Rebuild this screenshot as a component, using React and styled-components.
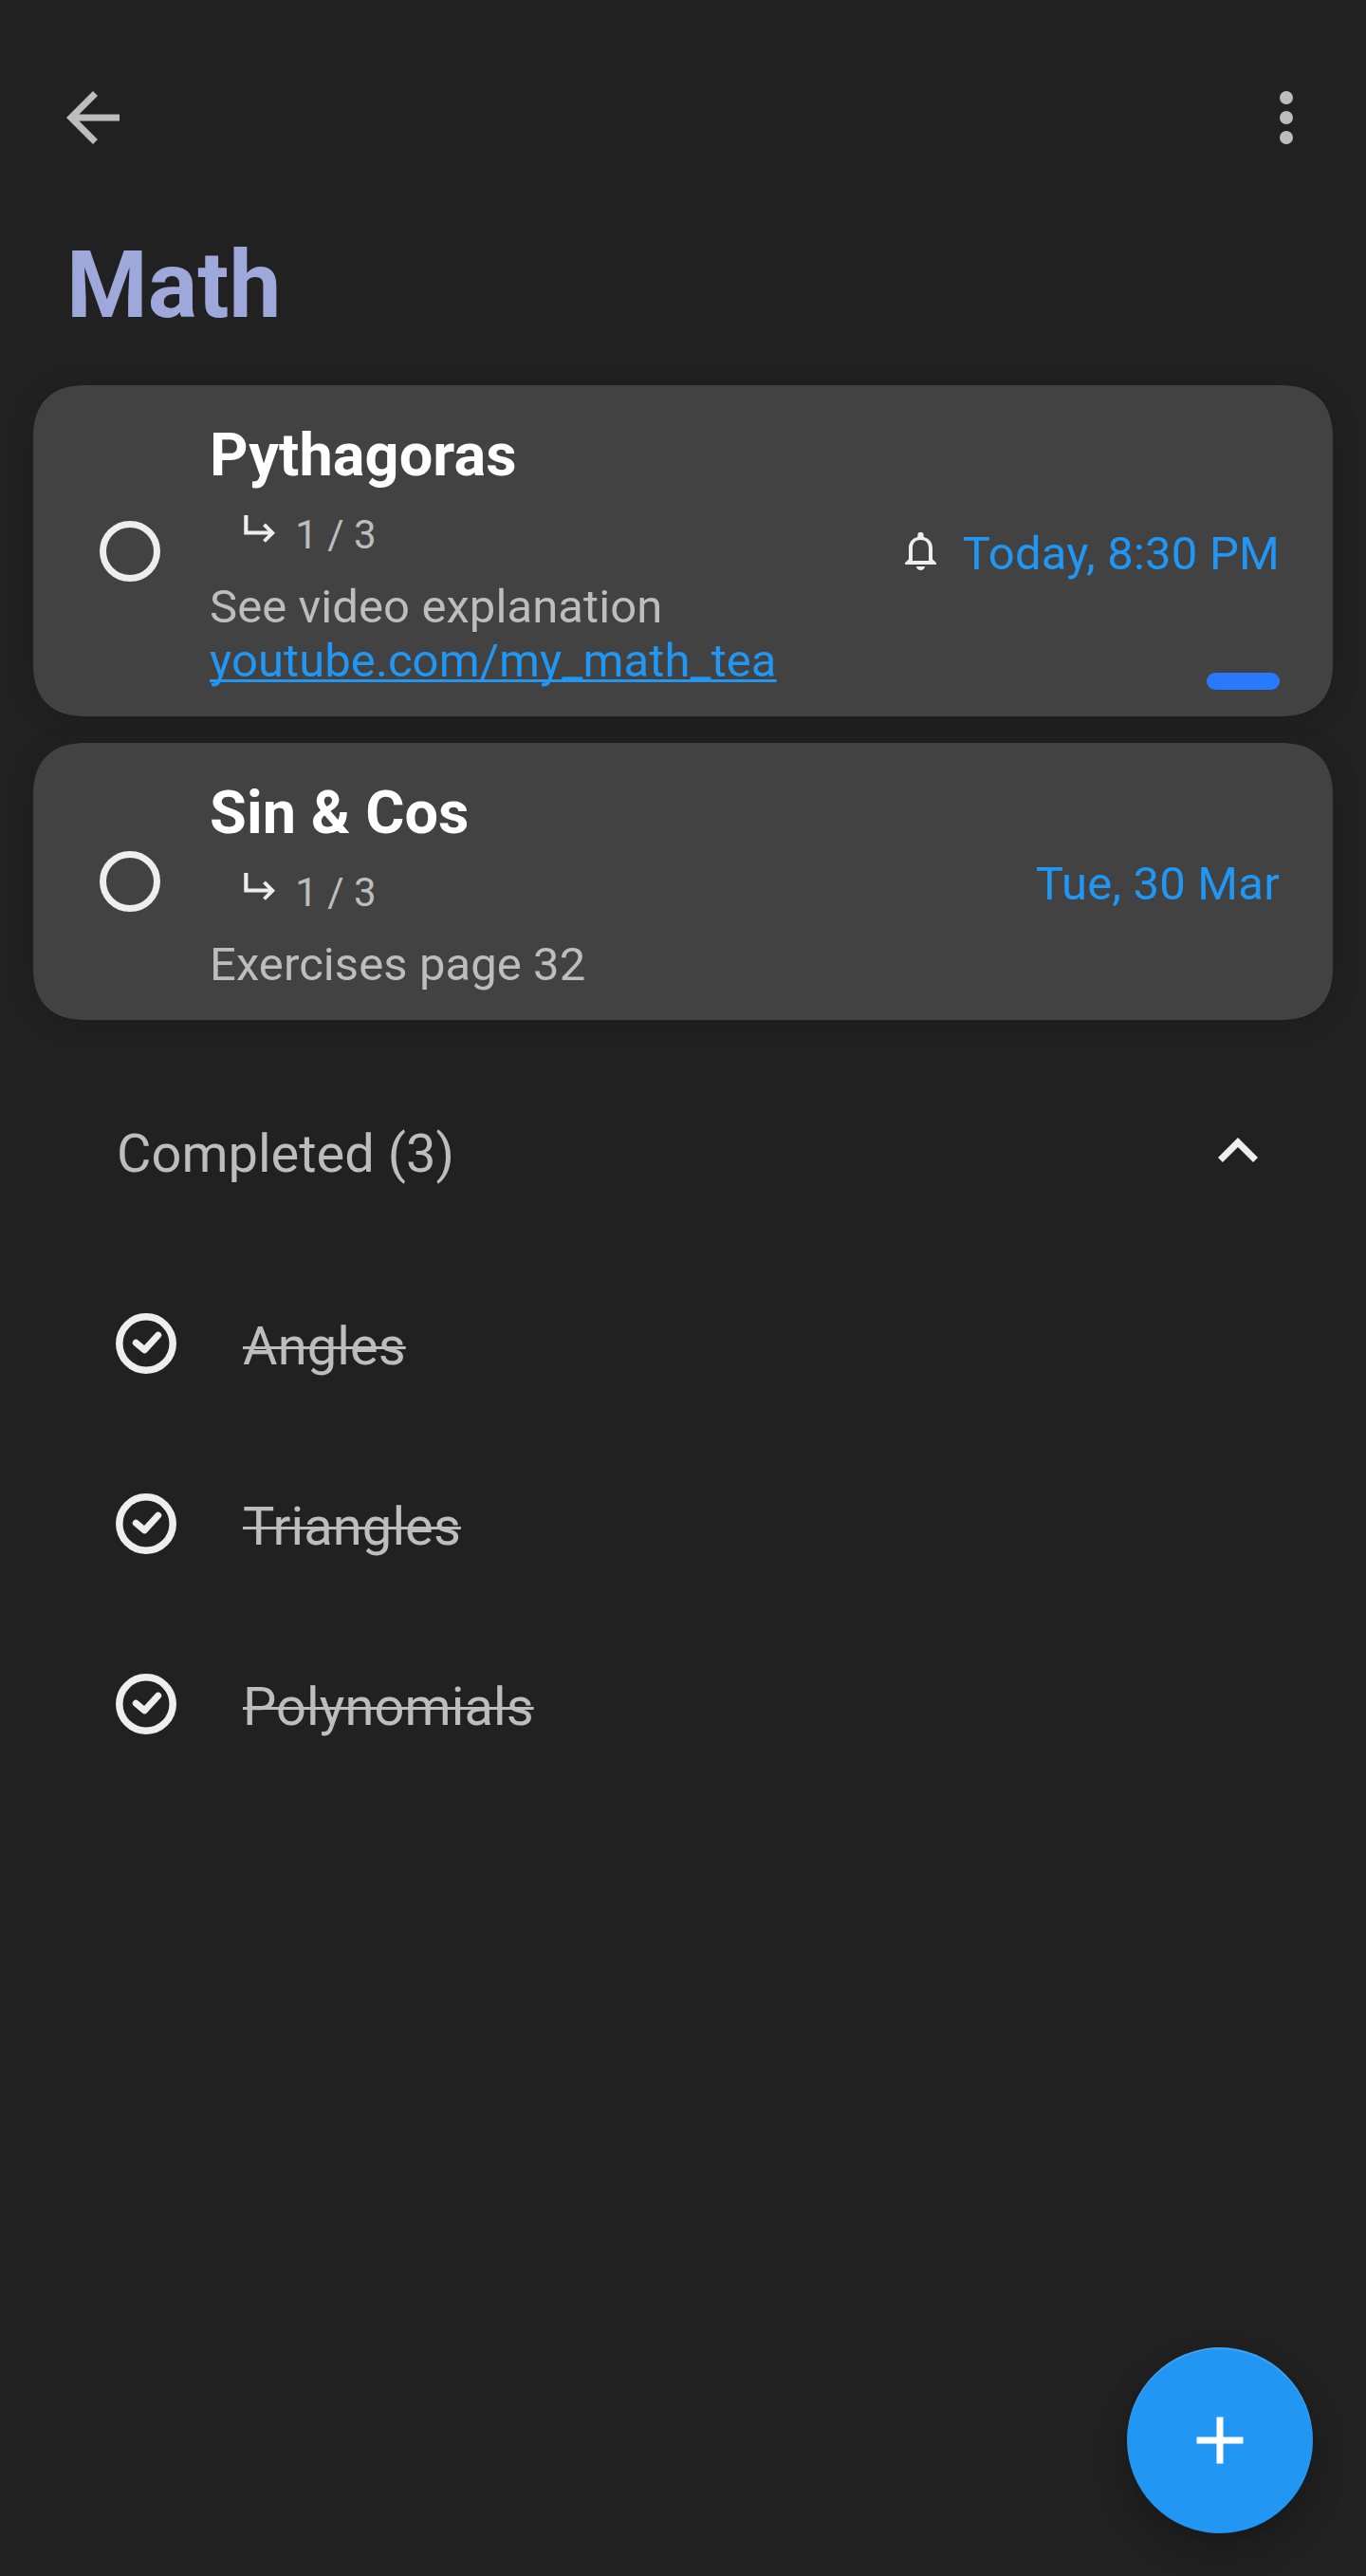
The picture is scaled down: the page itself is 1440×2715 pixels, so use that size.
import React from "react";
import styled, { createGlobalStyle } from "styled-components";

const GlobalStyle = createGlobalStyle`
  html, body {
    margin: 0;
    background: #212121;
  }
  * {
    box-sizing: border-box;
  }
`;

const Screen = styled.main`
  position: relative;
  width: 1440px;
  height: 2715px;
  overflow: hidden;
  background: #212121;
  color: #bdbdbd;
  font-family: Roboto, "Liberation Sans", sans-serif;
`;

const AppBar = styled.header`
  display: flex;
  align-items: center;
  justify-content: space-between;
  height: 166px;
  padding: 82px 42px 0 56px;
`;

const IconButton = styled.button`
  display: flex;
  padding: 0;
  border: 0;
  background: none;
  color: ${(p) => p.$color || "#bdbdbd"};
`;

const Icon = styled.svg`
  display: block;
  flex: none;
  width: 84px;
  height: 84px;
  fill: currentColor;
`;

const ListTitle = styled.h1`
  margin: 77px 0 0 70px;
  font-size: 98px;
  line-height: 115px;
  font-weight: 700;
  color: #9fa8da;
`;

const TaskList = styled.section`
  display: flex;
  flex-direction: column;
  gap: 28px;
  padding: 48px 35px 0;
`;

const TaskCard = styled.article`
  position: relative;
  display: flex;
  align-items: center;
  height: ${(p) => p.$height}px;
  padding: 0 56px 0 70px;
  border-radius: 48px;
  background: #424242;
  box-shadow: 0 4px 30px rgba(0, 0, 0, 0.12);

  @supports (corner-shape: superellipse(1.27)) {
    border-radius: 56px;
    corner-shape: superellipse(1.27);
  }
`;

const Ring = styled.span`
  flex: none;
  width: 64px;
  height: 64px;
  border: 7.5px solid #eeeeee;
  border-radius: 50%;
`;

const TaskBody = styled.div`
  flex: 1;
  align-self: flex-start;
  padding: 37px 0 0 52px;
`;

const TaskTitle = styled.h2`
  margin: 0;
  font-size: 63px;
  line-height: 74px;
  font-weight: 700;
  letter-spacing: 0.1px;
  color: #ffffff;
`;

const Subtasks = styled.div`
  display: flex;
  align-items: flex-start;
  gap: 21px;
  margin: 22px 0 23px 36px;
  font-size: 42px;
  line-height: 49px;
`;

const SubtaskArrow = styled.svg`
  flex: none;
  width: 33.3px;
  height: 28.7px;
  margin-top: 4px;
  fill: none;
  stroke: #eeeeee;
`;

const Note = styled.p`
  margin: 0;
  font-size: 49px;
  line-height: 57px;
  letter-spacing: 0.08px;
  white-space: nowrap;
`;

const NoteLink = styled.a`
  color: #2196f3;
  text-decoration: underline;
  text-decoration-thickness: 3px;
  text-decoration-skip-ink: none;
  text-underline-offset: 3px;
`;

const Due = styled.div`
  display: flex;
  align-items: center;
  gap: 28px;
  color: #2196f3;
`;

const DueText = styled.span`
  padding-top: 5.5px;
  font-size: 49px;
  line-height: 57px;
  letter-spacing: 0.2px;
  white-space: nowrap;
`;

const Bell = styled.svg`
  width: 33px;
  height: 40px;
  fill: #eeeeee;
`;

const PriorityTag = styled.span`
  position: absolute;
  right: 56px;
  bottom: 28px;
  width: 77px;
  height: 18px;
  border-radius: 9px;
  background: #2979ff;
`;

const CompletedHeader = styled.div`
  display: flex;
  align-items: center;
  justify-content: space-between;
  height: 190px;
  margin-top: 43px;
  padding: 0 93px 0 123px;
`;

const CompletedLabel = styled.span`
  padding-top: 6px;
  font-size: 56px;
  line-height: 66px;
`;

const CompletedList = styled.ul`
  margin: 13px 0 0;
  padding: 0 0 0 122px;
  list-style: none;
`;

const CompletedItem = styled.li`
  display: flex;
  align-items: center;
  gap: 70px;
  height: 190px;
`;

const DoneMark = styled.svg`
  flex: none;
  width: 64px;
  height: 64px;
  fill: none;
  stroke: #eeeeee;
`;

const DoneText = styled.span`
  padding-top: 6px;
  font-size: 56px;
  line-height: 66px;
  letter-spacing: 0.1px;
  text-decoration: line-through;
  text-decoration-thickness: 3px;
`;

const AddButton = styled.button`
  position: absolute;
  right: 56px;
  bottom: 45px;
  display: flex;
  align-items: center;
  justify-content: center;
  width: 196px;
  height: 196px;
  padding: 0;
  border: 0;
  border-radius: 50%;
  background: #2196f3;
  color: #ffffff;
  box-shadow: 0 18px 36px rgba(0, 0, 0, 0.2), 0 2px 8px rgba(0, 0, 0, 0.08),
    inset 0 2px 1px rgba(255, 255, 255, 0.14);
`;

const tasks = [
  {
    title: "Pythagoras",
    progress: "1 / 3",
    note: "See video explanation",
    link: "youtube.com/my_math_tea",
    due: "Today, 8:30 PM",
    reminder: true,
    priority: true,
    height: 349,
  },
  {
    title: "Sin & Cos",
    progress: "1 / 3",
    note: "Exercises page 32",
    due: "Tue, 30 Mar",
    height: 292,
  },
];

const completed = ["Angles", "Triangles", "Polynomials"];

function Task({ task }) {
  return (
    <TaskCard $height={task.height}>
      <Ring />
      <TaskBody>
        <TaskTitle>{task.title}</TaskTitle>
        <Subtasks>
          <SubtaskArrow viewBox="0 0 100 86">
            <path d="M7 0V55.5H92" strokeWidth="12.5" />
            <path d="M64.5 29.5L91 56L64.5 82.5" strokeWidth="11.5" />
          </SubtaskArrow>
          {task.progress}
        </Subtasks>
        <Note>{task.note}</Note>
        {task.link && (
          <Note>
            <NoteLink>{task.link}</NoteLink>
          </Note>
        )}
      </TaskBody>
      <Due>
        {task.reminder && (
          <Bell viewBox="0 0 99 120">
            <path
              fillRule="evenodd"
              d="M40 9a9.5 9.5 0 0 1 19 0v6C76 19 87 32 87 50v35l12 12v5H0v-5l12-12V50C12 32 23 19 40 15zM24 90h51V50c0-16-10-26-25.5-26S24 34 24 50z"
            />
            <path d="M36 108h27c0 7-6 12-13.5 12S36 115 36 108z" />
          </Bell>
        )}
        <DueText>{task.due}</DueText>
      </Due>
      {task.priority && <PriorityTag />}
    </TaskCard>
  );
}

export default function App() {
  return (
    <Screen>
      <GlobalStyle />
      <AppBar>
        <IconButton aria-label="Back">
          <Icon viewBox="0 0 24 24">
            <path d="M20 11H7.83l5.59-5.59L12 4l-8 8 8 8 1.41-1.41L7.83 13H20v-2z" />
          </Icon>
        </IconButton>
        <IconButton aria-label="More options">
          <Icon viewBox="0 0 24 24">
            <circle cx="12" cy="6" r="2" />
            <circle cx="12" cy="12" r="2" />
            <circle cx="12" cy="18" r="2" />
          </Icon>
        </IconButton>
      </AppBar>
      <ListTitle>Math</ListTitle>
      <TaskList>
        {tasks.map((task) => (
          <Task key={task.title} task={task} />
        ))}
      </TaskList>
      <CompletedHeader>
        <CompletedLabel>Completed ({completed.length})</CompletedLabel>
        <IconButton aria-label="Collapse" $color="#eeeeee">
          <Icon viewBox="0 0 24 24">
            <path d="M12 8l-6 6 1.41 1.41L12 10.83l4.59 4.58L18 14z" />
          </Icon>
        </IconButton>
      </CompletedHeader>
      <CompletedList>
        {completed.map((name) => (
          <CompletedItem key={name}>
            <DoneMark viewBox="0 0 64 64">
              <circle cx="32" cy="32" r="28.2" strokeWidth="7.5" />
              <path
                d="M21.3 31.3L30.3 38.8L44.7 23.1"
                strokeWidth="7"
                strokeLinecap="round"
                strokeLinejoin="round"
              />
            </DoneMark>
            <DoneText>{name}</DoneText>
          </CompletedItem>
        ))}
      </CompletedList>
      <AddButton aria-label="Add task">
        <Icon viewBox="0 0 24 24">
          <path d="M19 13h-6v6h-2v-6H5v-2h6V5h2v6h6v2z" />
        </Icon>
      </AddButton>
    </Screen>
  );
}
